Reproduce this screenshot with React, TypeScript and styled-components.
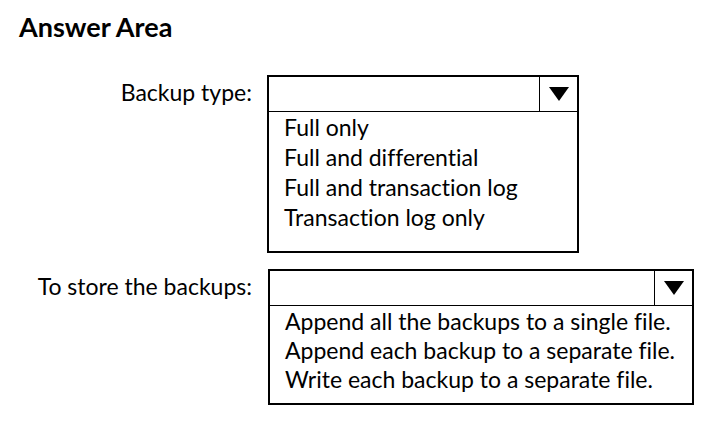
import React from "react";
import styled, { createGlobalStyle } from "styled-components";

const Global = createGlobalStyle`
  html, body { margin: 0; padding: 0; background: #fff; }
  body {
    font-family: "Lato", "Open Sans", sans-serif;
    color: #000;
    font-variant-ligatures: none;
  }
`;

const Page = styled.div`
  width: 707px;
  height: 434px;
  box-sizing: border-box;
  padding: 12px 0 0 19px;
`;

const Title = styled.h1`
  margin: 0;
  font-size: 27px;
  font-weight: 700;
  line-height: 30px;
`;

const Rows = styled.div`
  display: grid;
  grid-template-columns: 233px auto;
  column-gap: 15px;
  row-gap: 16px;
  margin-top: 33px;
  align-items: start;
`;

const Label = styled.div`
  text-align: right;
  font-size: 23px;
  line-height: 34px;
`;

const Box = styled.div<{ $w: number; $indent: number }>`
  width: ${(p) => p.$w}px;
  box-sizing: border-box;
  border: 2px solid #000;
  margin-left: ${(p) => p.$indent}px;
`;

const Header = styled.div<{ $h: number }>`
  display: flex;
  height: ${(p) => p.$h}px;
  border-bottom: 1px solid #000;
`;

const Field = styled.div`
  flex: 1;
`;

const Arrow = styled.div`
  width: 37px;
  border-left: 1px solid #000;
  display: flex;
  align-items: center;
  justify-content: center;
`;

const List = styled.ul<{ $lh: number; $pt: number; $pb: number }>`
  list-style: none;
  margin: 0;
  padding: ${(p) => p.$pt}px 0 ${(p) => p.$pb}px 15px;
  font-size: 23px;
  line-height: ${(p) => p.$lh}px;
`;

const Triangle = () => (
  <svg width="20" height="14" viewBox="0 0 20 14">
    <polygon points="0,0 20,0 10,14" fill="#000" />
  </svg>
);

export default function App() {
  return (
    <Page>
      <Global />
      <Title>Answer Area</Title>
      <Rows>
        <Label>Backup type:</Label>
        <Box $w={312} $indent={0}>
          <Header $h={34}>
            <Field />
            <Arrow>
              <Triangle />
            </Arrow>
          </Header>
          <List $lh={30} $pt={0} $pb={19}>
            <li>Full only</li>
            <li>Full and differential</li>
            <li>Full and transaction log</li>
            <li>Transaction log only</li>
          </List>
        </Box>
        <Label>To store the backups:</Label>
        <Box $w={426} $indent={1}>
          <Header $h={34}>
            <Field />
            <Arrow>
              <Triangle />
            </Arrow>
          </Header>
          <List $lh={29} $pt={1} $pb={9}>
            <li>Append all the backups to a single file.</li>
            <li>Append each backup to a separate file.</li>
            <li>Write each backup to a separate file.</li>
          </List>
        </Box>
      </Rows>
    </Page>
  );
}
